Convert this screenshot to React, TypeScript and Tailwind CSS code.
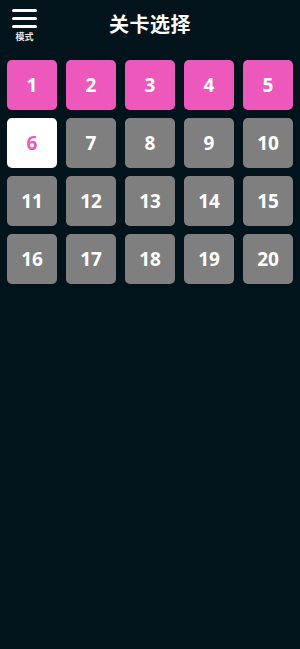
const levels = Array.from({ length: 20 }, (_, i) => i + 1)

const tileClass = (n: number) => {
  if (n <= 5) return 'bg-[#ec58bc] text-white'
  if (n === 6) return 'bg-white text-[#ec58bc]'
  return 'bg-[#7f7f7f] text-white'
}

export default function App() {
  return (
    <div
      className="w-[300px] h-[649px] bg-[#03131b] overflow-hidden"
      style={{ fontFamily: '"Noto Sans", "Noto Sans CJK SC", sans-serif' }}
    >
      <div className="relative h-[60px]">
        <div className="absolute left-[12px] top-[9px] flex flex-col items-center">
          <div className="flex flex-col gap-[5px] w-[25px]">
            <span className="block h-[3px] bg-white rounded-sm" />
            <span className="block h-[3px] bg-white rounded-sm" />
            <span className="block h-[3px] bg-white rounded-sm" />
          </div>
          <span className="mt-[4px] text-[9px] leading-[10px] font-bold text-[#e8e8e8]">模式</span>
        </div>
        <h1 className="pt-[11px] text-center text-[20px] leading-[28px] font-bold text-white tracking-[0.5px]">
          关卡选择
        </h1>
      </div>

      <div className="grid grid-cols-5 gap-x-[9px] gap-y-[8px] px-[7px]">
        {levels.map((n) => (
          <div
            key={n}
            className={`h-[50px] rounded-[5px] flex items-center justify-center text-[19px] font-bold ${tileClass(n)}`}
          >
            {n}
          </div>
        ))}
      </div>
    </div>
  )
}
